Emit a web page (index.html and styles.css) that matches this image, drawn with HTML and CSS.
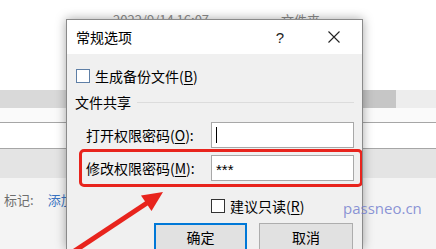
FILE: index.html
```html
<!DOCTYPE html>
<html lang="zh">
<head>
<meta charset="utf-8">
<link rel="stylesheet" href="styles.css">
</head>
<body>
<div class="page">
  <div class="bg-top">
    <span class="bg-date">2022/9/14 16:07</span>
    <span class="bg-type">文件夹</span>
  </div>
  <div class="bg-band">
    <div class="band-left"></div>
    <div class="band-dark"></div>
    <div class="band-right"></div>
  </div>
  <div class="bg-gap"></div>
  <div class="bg-field"></div>
  <div class="bg-grey"></div>
  <div class="bg-meta">
    <span class="meta-label">标记:</span>
    <span class="meta-link">添加标记</span>
  </div>
</div>

<div class="dialog">
  <div class="titlebar">
    <span class="title">常规选项</span>
    <span class="help">?</span>
    <svg class="close" width="12" height="12" viewBox="0 0 12 12"><path d="M0.5 0.5 L11.5 11.5 M11.5 0.5 L0.5 11.5" stroke="#222" stroke-width="1.1" fill="none"/></svg>
  </div>
  <div class="body">
    <label class="check-row">
      <span class="checkbox light"></span>
      <span>生成备份文件(<u>B</u>)</span>
    </label>
    <div class="group-head">
      <span>文件共享</span>
      <span class="group-line"></span>
    </div>
    <div class="field-row">
      <span class="field-label">打开权限密码(<u>O</u>):</span>
      <span class="input"><span class="caret"></span></span>
    </div>
    <div class="field-row highlight">
      <span class="field-label">修改权限密码(<u>M</u>):</span>
      <span class="input">***</span>
    </div>
    <label class="check-row readonly">
      <span class="checkbox"></span>
      <span>建议只读(<u>R</u>)</span>
    </label>
    <div class="buttons">
      <span class="btn default">确定</span>
      <span class="btn">取消</span>
    </div>
  </div>
</div>

<span class="watermark">passneo.cn</span>

<svg class="arrow" width="436" height="249" viewBox="0 0 436 249">
  <line x1="70" y1="254" x2="150" y2="201" stroke="#e8241d" stroke-width="5" stroke-linecap="butt"/>
  <polygon points="163,192 141,195.5 151.5,211" fill="#e8241d"/>
</svg>
</body>
</html>
```

FILE: styles.css
```css
* { box-sizing: border-box; }

html, body {
  margin: 0;
  padding: 0;
}

body {
  width: 436px;
  height: 249px;
  overflow: hidden;
  position: relative;
  background: #ffffff;
  font-family: "Noto Sans CJK SC", "Noto Sans", sans-serif;
  color: #000;
}

.page {
  display: flex;
  flex-direction: column;
  width: 436px;
  height: 249px;
}

.bg-top {
  height: 90px;
  background: #ffffff;
  display: flex;
  align-items: flex-start;
  padding-top: 11px;
  font-size: 13px;
  color: #8a8a8a;
  line-height: 18px;
}
.bg-date { margin-left: 113px; }
.bg-type { margin-left: 72px; }

.bg-band {
  height: 18px;
  display: flex;
}
.band-left { width: 362px; background: #d9d9d9; }
.band-dark { width: 34px; background: #c6c6c6; }
.band-right { flex: 1; background: #ededed; }

.bg-gap {
  height: 14px;
  background: #fafafa;
}

.bg-field {
  height: 27px;
  background: #ffffff;
  border-top: 1px solid #a6a6a6;
  border-bottom: 1px solid #a6a6a6;
}

.bg-grey {
  height: 29px;
  background: #e4e4e4;
}

.bg-meta {
  flex: 1;
  background: #f4f4f4;
  display: flex;
  align-items: flex-start;
  padding-top: 12px;
  padding-left: 4px;
  font-size: 13px;
  line-height: 20px;
}
.meta-label { color: #6e6e6e; }
.meta-link { color: #3a74c2; margin-left: 14px; }

/* dialog window */
.dialog {
  position: absolute;
  left: 66px;
  top: 19px;
  width: 297px;
  height: 230px;
  overflow: hidden;
  background: #f0f0f0;
  border: 1px solid #8a8a8a;
  border-bottom: none;
  box-shadow: 0 0 10px rgba(0, 0, 0, 0.35);
  font-size: 14px;
}

.titlebar {
  height: 34px;
  background: #ffffff;
  display: flex;
  align-items: center;
  padding-left: 9px;
}
.title {
  flex: 1;
  font-size: 14px;
  color: #000;
}
.help {
  width: 20px;
  text-align: center;
  font-family: "Liberation Sans", sans-serif;
  font-size: 15px;
  color: #222;
}
.close {
  margin-left: 38px;
  margin-right: 22px;
}

.body {
  padding-left: 9px;
  display: flex;
  flex-direction: column;
}

u { text-decoration: underline; text-underline-offset: 2px; }

.check-row {
  height: 20px;
  margin-top: 12px;
  display: flex;
  align-items: center;
  line-height: 20px;
  color: #000;
}
.checkbox {
  width: 14px;
  height: 14px;
  border: 1px solid #333;
  background: #ffffff;
  margin-right: 5px;
}
.checkbox.light {
  border-color: #5e7fa6;
}

.group-head {
  height: 20px;
  margin-top: 6px;
  display: flex;
  align-items: center;
  line-height: 20px;
  margin-left: -1px;
}
.group-line {
  flex: 1;
  height: 1px;
  background: #dcdcdc;
  margin-left: 6px;
  margin-right: 8px;
}

.field-row {
  display: flex;
  align-items: center;
  margin-top: 10px;
  padding-left: 10px;
  line-height: 20px;
}
.field-label { width: 125px; }
.input {
  width: 143px;
  height: 26px;
  background: #ffffff;
  border: 1px solid #a8a8a8;
  display: flex;
  align-items: center;
  padding-left: 4px;
  font-family: "Liberation Sans", sans-serif;
  font-size: 15px;
  padding-top: 3px;
}
.caret {
  width: 1px;
  height: 16px;
  background: #000;
  margin-top: -3px;
}

.field-row.highlight {
  margin-top: 1px;
  margin-left: 3px;
  width: 284px;
  padding: 3px 6px 3px 4px;
  border: 3px solid #e8241d;
  border-radius: 5px;
}

.check-row.readonly {
  margin-top: 9px;
  padding-left: 135px;
}

.buttons {
  display: flex;
  gap: 12px;
  margin-top: 7px;
  padding-left: 78px;
}
.btn {
  width: 94px;
  height: 30px;
  background: #e1e1e1;
  border: 1px solid #adadad;
  display: flex;
  justify-content: center;
  align-items: center;
  padding-bottom: 2px;
  font-size: 14px;
}
.btn.default {
  width: 93px;
  border: 2px solid #0078d7;
}

.watermark {
  position: absolute;
  left: 343px;
  top: 197px;
  font-family: "Open Sans", "Noto Sans", sans-serif;
  font-size: 15px;
  line-height: 22px;
  color: rgba(110, 122, 205, 0.8);
}

.arrow {
  position: absolute;
  left: 0;
  top: 0;
  pointer-events: none;
}
```
